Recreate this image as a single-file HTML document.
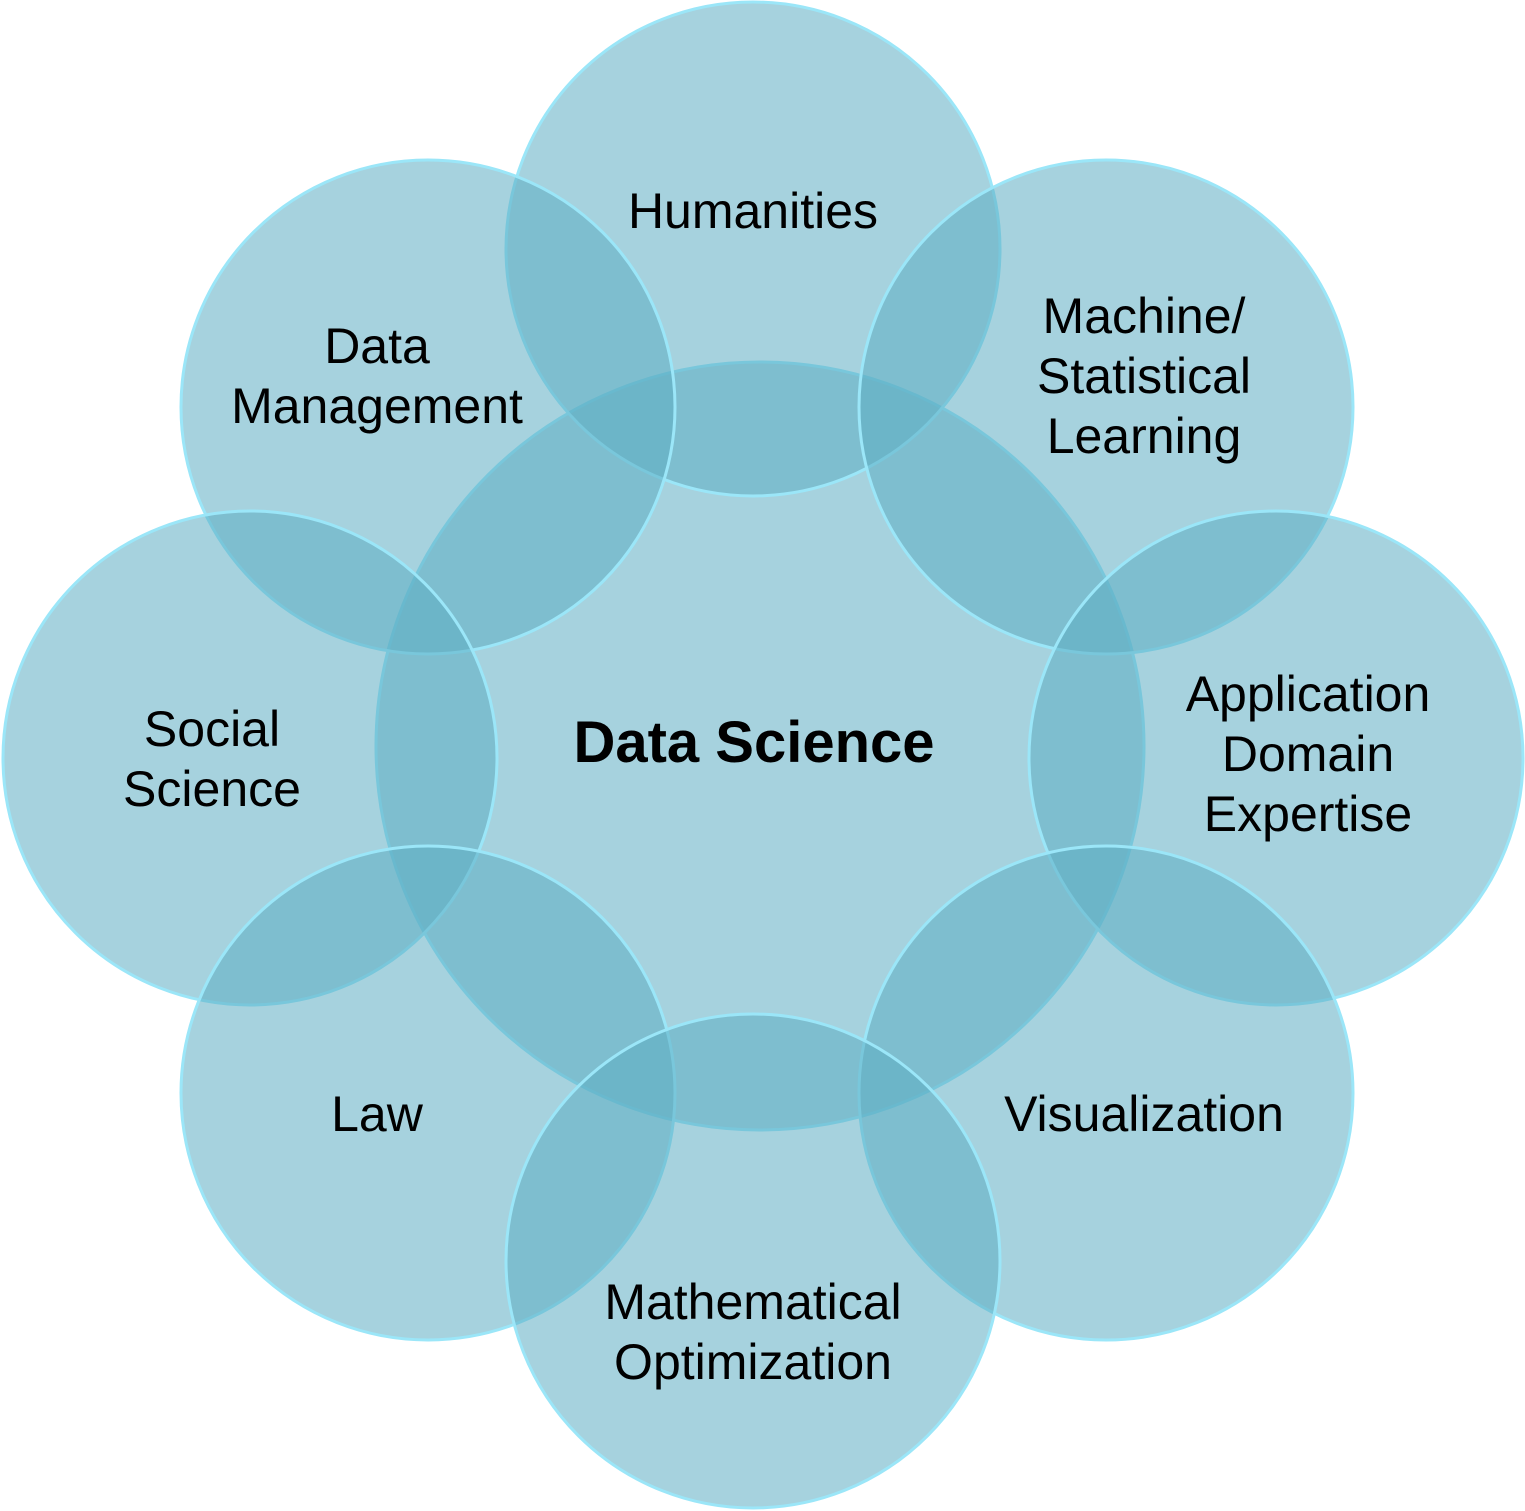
<!DOCTYPE html>
<html><head><meta charset="utf-8"><style>
html,body{margin:0;padding:0;background:#fff;}
svg{display:block;}
text{font-family:"Liberation Sans",Arial,sans-serif;font-size:50px;fill:#000;text-anchor:middle;}
</style></head><body>
<svg width="1525" height="1511" viewBox="0 0 1525 1511">
<g fill="rgba(93,173,195,0.55)" stroke="#9be6f8" stroke-width="3">
<circle cx="760" cy="746" r="384"/>
<circle cx="753" cy="249" r="247"/>
<circle cx="1106" cy="407" r="247"/>
<circle cx="428" cy="407" r="247"/>
<circle cx="250" cy="758" r="247"/>
<circle cx="1276" cy="758" r="247"/>
<circle cx="428" cy="1093" r="247"/>
<circle cx="1106" cy="1093" r="247"/>
<circle cx="753" cy="1261" r="247"/>
</g>
<text x="753" y="228">Humanities</text>
<text x="377" y="363">Data</text>
<text x="377" y="423">Management</text>
<text x="1144" y="333">Machine/</text>
<text x="1144" y="393">Statistical</text>
<text x="1144" y="453">Learning</text>
<text x="212" y="746">Social</text>
<text x="212" y="806">Science</text>
<text x="1308" y="711">Application</text>
<text x="1308" y="771">Domain</text>
<text x="1308" y="831">Expertise</text>
<text x="754" y="762" style="font-weight:bold;font-size:58px">Data Science</text>
<text x="377" y="1131">Law</text>
<text x="1144" y="1131">Visualization</text>
<text x="753" y="1319">Mathematical</text>
<text x="753" y="1379">Optimization</text>
</svg>
</body></html>
